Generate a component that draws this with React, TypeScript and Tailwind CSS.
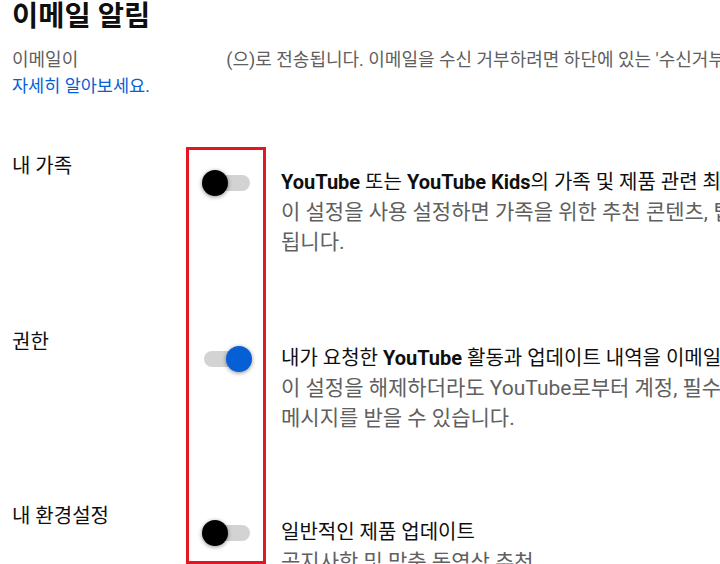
import React from 'react';

type Row = {
  label: string;
  on: boolean;
  title: React.ReactNode;
  lines: string[];
};

const rows: Row[] = [
  {
    label: '내 가족',
    on: false,
    title: (
      <>
        <b>YouTube</b> 또는 <b>YouTube Kids</b>의 가족 및 제품 관련 최신 소식
      </>
    ),
    lines: ['이 설정을 사용 설정하면 가족을 위한 추천 콘텐츠, 팁, 제품 업데이트 등이 전송', '됩니다.'],
  },
  {
    label: '권한',
    on: true,
    title: (
      <>
        내가 요청한 <b>YouTube</b> 활동과 업데이트 내역을 이메일로 받기
      </>
    ),
    lines: ['이 설정을 해제하더라도 YouTube로부터 계정, 필수 서비스 관련', '메시지를 받을 수 있습니다.'],
  },
  {
    label: '내 환경설정',
    on: false,
    title: <>일반적인 제품 업데이트</>,
    lines: ['공지사항 및 맞춤 동영상 추천'],
  },
];

const rowStart = ['row-start-1', 'row-start-2', 'row-start-3'];

function Toggle({ on }: { on: boolean }) {
  return (
    <div className="relative h-[26px] w-[50px]">
      <div className="absolute left-[2px] right-[2px] top-[5px] h-[16px] rounded-full bg-[#d3d3d3]" />
      <div
        className={
          on
            ? 'absolute right-0 top-0 h-[26px] w-[26px] rounded-full bg-[#065fd4] shadow-[0_1px_4px_rgba(0,0,0,0.45)]'
            : 'absolute left-0 top-0 h-[26px] w-[26px] rounded-full bg-black shadow-[0_1px_4px_rgba(0,0,0,0.45)]'
        }
      />
    </div>
  );
}

export default function App() {
  return (
    <div
      className="h-[564px] w-[720px] overflow-hidden bg-white text-[#0f0f0f]"
      style={{ fontFamily: 'Roboto, "Noto Sans CJK KR", sans-serif' }}
    >
      {/* header */}
      <div className="pl-3">
        <h1 className="text-[28.5px] font-bold leading-[34px]">이메일 알림</h1>
        <p className="mt-[13px] whitespace-nowrap text-[18px] leading-[26px] text-[#606060]">
          이메일이<span className="inline-block w-[148px]" />(으)로 전송됩니다. 이메일을 수신 거부하려면 하단에 있는 '수신거부'
        </p>
        <a className="block text-[17.5px] leading-[26px] text-[#065fd4]">자세히 알아보세요.</a>
      </div>

      {/* settings */}
      <div className="mt-[48px] grid grid-cols-[186px_95px_1fr] grid-rows-[176px_174px_auto]">
        <div className="col-start-2 row-span-3 row-start-1 h-[417px] w-[80px] border-[3px] border-[#e4161f]" />
        {rows.map((r, i) => (
          <React.Fragment key={r.label}>
            <div className={`col-start-1 pl-3 pt-[5px] text-[20px] leading-[28px] ${rowStart[i]}`}>
              {r.label}
            </div>
            <div className={`col-start-2 pl-[16px] pt-[23px] ${rowStart[i]}`}>
              <Toggle on={r.on} />
            </div>
            <div className={`col-start-3 whitespace-nowrap pt-[20px] leading-[30px] ${rowStart[i]}`}>
              <div className="text-[20px]">{r.title}</div>
              {r.lines.map((l) => (
                <div key={l} className="text-[21px] text-[#606060]">
                  {l}
                </div>
              ))}
            </div>
          </React.Fragment>
        ))}
      </div>
    </div>
  );
}
